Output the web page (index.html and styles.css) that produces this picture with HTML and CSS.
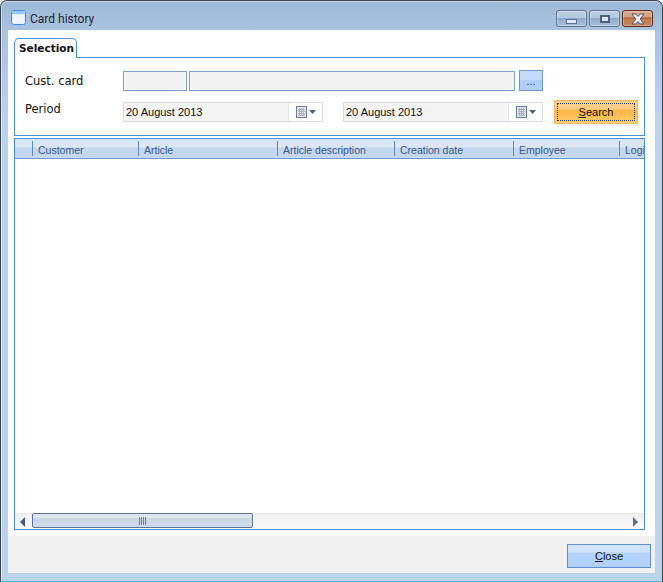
FILE: index.html
```html
<!DOCTYPE html>
<html lang="en">
<head>
<meta charset="utf-8">
<title>Card history</title>
<link rel="stylesheet" href="styles.css">
</head>
<body>
<div class="window">
  <header class="titlebar">
    <svg class="app-icon" width="15" height="15" viewBox="0 0 15 15"><rect x="0.5" y="0.5" width="14" height="14" rx="2" fill="#dcebfb" stroke="#3f8fe8"/><rect x="1" y="1" width="13" height="3" fill="#9cc6f2"/><rect x="2" y="5" width="11" height="8.500" fill="#eef5fd"/></svg>
    <span class="title">Card history</span>
    <div class="caption-buttons">
      <div class="cap cap-min"><span class="glyph-min"></span></div>
      <div class="cap cap-max"><span class="glyph-max"></span></div>
      <div class="cap cap-close">
        <svg width="18" height="12" viewBox="0 0 18 12"><path d="M3 1h3.800L9 3.500 11.200 1H15L11.200 6 15 11h-3.800L9 8.500 6.800 11H3l3.800-5z" fill="#eef1f7" stroke="#4a5468" stroke-width="1"/></svg>
      </div>
    </div>
  </header>
  <div class="client">
    <main class="content">
      <div class="tab">Selection</div>
      <section class="panel">
        <div class="row row-card">
          <label class="lbl">Cust. card</label>
          <div class="inp inp-code"></div>
          <div class="inp inp-name"></div>
          <div class="dots">...</div>
        </div>
        <div class="row row-period">
          <label class="lbl lbl-period">Period</label>
          <div class="date">
            <span class="date-text">20 August 2013</span>
            <span class="date-btn">
              <svg width="22" height="14" viewBox="0 0 22 14"><rect x="0.5" y="1.5" width="10" height="11" fill="#e4e8ed" stroke="#6b7d96"/><path d="M2 4.500h7M2 6.500h7M2 8.500h7M2 10.500h7M3.500 3v8M5.500 3v8M7.500 3v8" stroke="#aab3bf" stroke-width="1"/><path d="M13 5h7l-3.500 4z" fill="#4f6485"/></svg>
            </span>
          </div>
          <div class="date date-second">
            <span class="date-text">20 August 2013</span>
            <span class="date-btn">
              <svg width="22" height="14" viewBox="0 0 22 14"><rect x="0.5" y="1.5" width="10" height="11" fill="#e4e8ed" stroke="#6b7d96"/><path d="M2 4.500h7M2 6.500h7M2 8.500h7M2 10.500h7M3.500 3v8M5.500 3v8M7.500 3v8" stroke="#aab3bf" stroke-width="1"/><path d="M13 5h7l-3.500 4z" fill="#4f6485"/></svg>
            </span>
          </div>
          <button class="search"><span class="focus"><span><u>S</u>earch</span></span></button>
        </div>
      </section>
      <section class="grid">
        <div class="grid-head">
          <div class="col c0"></div>
          <div class="col c1">Customer</div>
          <div class="col c2">Article</div>
          <div class="col c3">Article description</div>
          <div class="col c4">Creation date</div>
          <div class="col c5">Employee</div>
          <div class="col c6">Logi</div>
        </div>
        <div class="grid-body"></div>
        <div class="hscroll">
          <span class="arrow arrow-l"></span>
          <div class="track">
            <div class="thumb"><span class="grip"></span></div>
          </div>
          <span class="arrow arrow-r"></span>
        </div>
      </section>
    </main>
    <footer class="footer">
      <button class="close"><span><u>C</u>lose</span></button>
    </footer>
  </div>
</div>
</body>
</html>
```

FILE: styles.css
```css
* { box-sizing: border-box; }
html, body { margin: 0; padding: 0; height: 100%; }
body { width: 663px; height: 582px; overflow: hidden; background: #fff; font-family: "Liberation Sans", Arial, sans-serif; font-size: 11px; color: #111; }

.window {
  width: 663px; height: 582px;
  display: flex; flex-direction: column;
  border: 1px solid #3a4654; border-bottom-color: #3fb4d0;
  border-radius: 7px 7px 0 0;
  background: linear-gradient(#9db9d7 0, #a9c3df 30px, #bcd3ec 120px, #bcd3ec 100%);
  padding: 0 7px 8px 7px;
  box-shadow: inset 1px 1px 0 rgba(255,255,255,.45);
}

.titlebar { height: 29px; display: flex; align-items: center; padding-left: 3px; flex: none; }
.app-icon { margin-right: 4px; margin-top: 3px; }
.title { font-family: Roboto, sans-serif; font-size: 12px; color: #1d2430; margin-top: 7px; }
.caption-buttons { margin-left: auto; margin-right: 2px; display: flex; gap: 2px; align-self: flex-start; margin-top: 9px; }
.cap { height: 17px; border: 1px solid #5d7390; border-radius: 3px; display: flex; align-items: center; justify-content: center; box-shadow: inset 0 0 0 1px rgba(255,255,255,.3); }
.cap-min, .cap-max { background: linear-gradient(#bccfe4 0, #b3c8df 45%, #8faac9 50%, #a8c0da 100%); }
.cap-min { width: 31px; }
.cap-max { width: 31px; }
.cap-close { width: 31px; background: linear-gradient(#d9a98a 0, #d4a07f 42%, #7d4227 46%, #c47a4e 52%, #c9855b 100%); border-color: #5a2a1e; }
.glyph-min { width: 11px; height: 5px; margin-top: 5px; background: #dfe7f1; border: 1px solid #5f7190; flex: none; }
.glyph-max { width: 10px; height: 8px; border: 2px solid #4b5f80; background: #dbe4ef; flex: none; }

.client { flex: 1; display: flex; flex-direction: column; background: #fff; min-height: 0; }
.content { flex: 1; min-height: 0; display: flex; flex-direction: column; padding: 8px 10px 6px 6px; }

.tab { width: 63px; height: 20px; flex: none; border: 1px solid #4a90e2; border-bottom: 0; border-radius: 5px 5px 0 0; background: #fff; padding-left: 4px; font-family: "DejaVu Sans", sans-serif; font-weight: 700; font-size: 10.5px; line-height: 19px; position: relative; z-index: 1; color: #111; }

.panel { height: 79px; flex: none; border: 1px solid #4a90e2; margin-top: -1px; padding: 13px 0 0 10px; }
.row { display: flex; align-items: flex-start; }
.row-card { height: 29px; }
.lbl { width: 98px; font-family: "DejaVu Sans", sans-serif; font-size: 11.5px; line-height: 20px; flex: none; }
.inp { height: 20px; background: #f3f3f3; border: 1px solid #7ba2cf; }
.inp-code { width: 64px; }
.inp-name { width: 326px; margin-left: 2px; }
.dots { width: 24px; height: 21px; margin-left: 4px; margin-top: -1px; border: 1px solid #6f9ad0; background: linear-gradient(#c4dcfa 0, #c4dcfa 45%, #aecef8 50%, #b2d1f9 100%); text-align: center; line-height: 20px; font-size: 11px; color: #333; }
.lbl-period { margin-top: -1px; }
.date { width: 200px; height: 20px; border: 1px solid #d8dde3; display: flex; background: #fff; margin-top: 2px; }
.date-second { margin-left: 20px; }
.date-text { flex: 1; background: #f4f4f4; font-size: 11px; line-height: 18px; padding-left: 2px; color: #111; border-right: 1px solid #e0e4e9; }
.date-btn { width: 33px; flex: none; display: flex; align-items: center; justify-content: center; padding-left: 2px; }

.search { width: 84px; height: 24px; margin-left: 11px; padding: 2px; border: 1px solid #f4b860; background: linear-gradient(#ffce85 0, #ffcf88 36%, #fdb94a 40%, #fdbb4f 60%, #ffcf70 100%); font-family: "Liberation Sans", Arial, sans-serif; font-size: 11px; color: #111; display: flex; }
.focus { flex: 1; border: 1px dotted #2b3a80; display: flex; align-items: center; justify-content: center; }

.grid { flex: 1; min-height: 0; margin-top: 2px; border: 1px solid #4a90e2; display: flex; flex-direction: column; }
.grid-head { height: 20px; flex: none; display: flex; overflow: hidden; border-bottom: 1px solid #6f9ad0; background: linear-gradient(#d7e4f3 0, #dbe7f5 40%, #c3d6ec 50%, #c6d8ed 100%); font-size: 10.5px; color: #3a5a8c; }
.col { flex: none; height: 15px; margin-top: 2px; line-height: 18px; padding-left: 5px; border-right: 1px solid #5f8ac0; white-space: nowrap; }
.c0 { width: 18px; }
.c1 { width: 106px; }
.c2 { width: 139px; }
.c3 { width: 117px; }
.c4 { width: 119px; }
.c5 { width: 106px; }
.c6 { border-right: 0; }
.grid-body { flex: 1; background: #fff; }

.hscroll { height: 16px; flex: none; display: flex; align-items: center; background: linear-gradient(#f0f0f0, #fafafa); border-top: 1px solid #e8e8e8; }
.arrow { width: 0; height: 0; flex: none; border-top: 5px solid transparent; border-bottom: 5px solid transparent; }
.arrow-l { border-right: 5px solid #44598a; margin-left: 5px; }
.arrow-r { border-left: 5px solid #5a6f92; margin-right: 6px; }
.track { flex: 1; height: 100%; padding: 0 0 0 7px; }
.thumb { width: 221px; height: 15px; margin-top: -1px; border: 1px solid #5f7499; border-radius: 2px; background: linear-gradient(#dde5ee 0, #dde5ee 30%, #c9d6e4 35%, #cedae8 100%); display: flex; align-items: center; justify-content: center; }
.grip { width: 7px; height: 8px; background: repeating-linear-gradient(90deg, #6e7f98 0 1px, transparent 1px 2px); }

.footer { height: 37px; flex: none; background: #f0f0f0; display: flex; justify-content: flex-end; padding: 8px 4px 0 0; }
.close { width: 84px; height: 24px; border: 1px solid #5f8fd0; padding: 0; background: linear-gradient(#d0e3fb 0, #d0e3fb 32%, #b4d3fb 36%, #b2d1fa 100%); font-family: "Liberation Sans", Arial, sans-serif; font-size: 11px; color: #111; }
```
